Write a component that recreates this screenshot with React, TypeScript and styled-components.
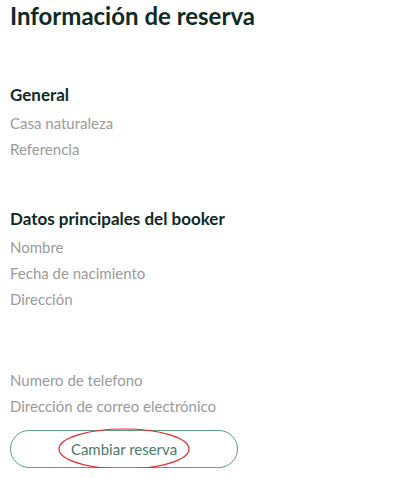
import React from "react";
import styled, { createGlobalStyle } from "styled-components";

const Global = createGlobalStyle`
  html, body { margin: 0; padding: 0; background: #ffffff; }
  body { font-family: Lato, "Open Sans", sans-serif; }
`;

const Page = styled.div`
  width: 418px;
  padding: 0 10px;
  box-sizing: border-box;
  display: flex;
  flex-direction: column;
`;

const Title = styled.h1`
  margin: 0;
  font-size: 24px;
  line-height: 32px;
  font-weight: 700;
  color: #0f2a24;
`;

const Section = styled.section<{ $top: number }>`
  display: flex;
  flex-direction: column;
  margin-top: ${(p) => p.$top}px;
`;

const Heading = styled.h2`
  margin: 0 0 2px 0;
  font-size: 17px;
  line-height: 26px;
  font-weight: 700;
  color: #0f2a24;
`;

const Label = styled.div`
  font-size: 15px;
  line-height: 26px;
  color: #9b9b9b;
`;

const ButtonWrap = styled.div`
  position: relative;
  width: 228px;
  margin-top: 11px;
`;

const Button = styled.button`
  width: 100%;
  height: 38px;
  border: 1px solid #5f9c84;
  border-radius: 19px;
  background: #ffffff;
  font-family: Lato, "Open Sans", sans-serif;
  font-size: 15px;
  color: #4b7d68;
  cursor: pointer;
`;

const Annotation = styled.svg`
  position: absolute;
  left: 48px;
  top: -2px;
  pointer-events: none;
`;

export default function App() {
  return (
    <>
      <Global />
      <Page>
        <Title>Información de reserva</Title>
        <Section $top={50}>
          <Heading>General</Heading>
          <Label>Casa naturaleza</Label>
          <Label>Referencia</Label>
        </Section>
        <Section $top={44}>
          <Heading>Datos principales del booker</Heading>
          <Label>Nombre</Label>
          <Label>Fecha de nacimiento</Label>
          <Label>Dirección</Label>
        </Section>
        <Section $top={55}>
          <Label>Numero de telefono</Label>
          <Label>Dirección de correo electrónico</Label>
        </Section>
        <ButtonWrap>
          <Button>Cambiar reserva</Button>
          <Annotation width="134" height="44" viewBox="0 0 134 44">
            <ellipse cx="66" cy="21" rx="65" ry="20" fill="none" stroke="#e8262b" strokeWidth="1.2" />
          </Annotation>
        </ButtonWrap>
      </Page>
    </>
  );
}
